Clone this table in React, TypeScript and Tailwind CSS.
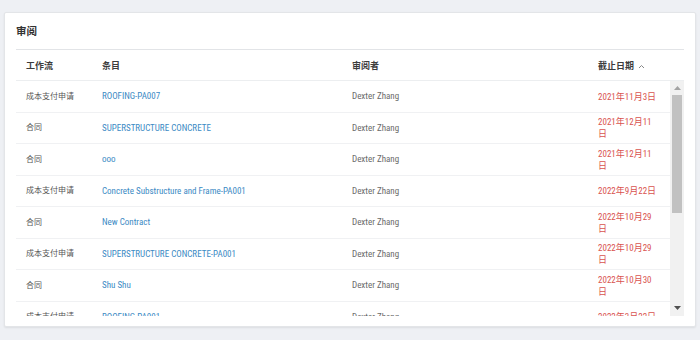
import React from "react";

type Row = {
  flow: string;
  item: string;
  reviewer: string;
  due: string;
};

const rows: Row[] = [
  { flow: "成本支付申请", item: "ROOFING-PA007", reviewer: "Dexter Zhang", due: "2021年11月3日" },
  { flow: "合同", item: "SUPERSTRUCTURE CONCRETE", reviewer: "Dexter Zhang", due: "2021年12月11日" },
  { flow: "合同", item: "ooo", reviewer: "Dexter Zhang", due: "2021年12月11日" },
  { flow: "成本支付申请", item: "Concrete Substructure and Frame-PA001", reviewer: "Dexter Zhang", due: "2022年9月22日" },
  { flow: "合同", item: "New Contract", reviewer: "Dexter Zhang", due: "2022年10月29日" },
  { flow: "成本支付申请", item: "SUPERSTRUCTURE CONCRETE-PA001", reviewer: "Dexter Zhang", due: "2022年10月29日" },
  { flow: "合同", item: "Shu Shu", reviewer: "Dexter Zhang", due: "2022年10月30日" },
  { flow: "成本支付申请", item: "ROOFING-PA001", reviewer: "Dexter Zhang", due: "2022年3月22日" },
];

const font =
  "font-['Liberation_Sans_Narrow','Roboto_Condensed','Roboto','Noto_Sans_CJK_SC',sans-serif]";

// drawn scrollbar, the page's native one is hidden in the capture
function ScrollBar() {
  return (
    <div className="w-[14px] shrink-0 bg-[#f1f1f1] flex flex-col items-center">
      <div className="h-[14px] flex items-center justify-center">
        <svg width="7" height="4" viewBox="0 0 7 4">
          <path d="M0 4 L3.5 0 L7 4 Z" fill="#a3a3a3" />
        </svg>
      </div>
      <div className="w-[10px] h-[118px] bg-[#c1c1c1]" />
      <div className="flex-1" />
      <div className="h-[16px] flex items-center justify-center">
        <svg width="7" height="4" viewBox="0 0 7 4">
          <path d="M0 0 L3.5 4 L7 0 Z" fill="#505050" />
        </svg>
      </div>
    </div>
  );
}

export default function App() {
  return (
    <div className={`w-[700px] h-[340px] bg-[#eef0f4] pt-[12px] px-[4px] ${font}`}>
      <div className="h-[315px] bg-white border border-[#e3e5e8] rounded-[2px] shadow-[0_1px_2px_rgba(0,0,0,0.08)] px-[11px] flex flex-col">
        <div className="h-[37px] pt-[1px] flex items-center border-b border-[#e2e4e7] text-[10.5px] font-semibold text-[#333] shrink-0">
          审阅
        </div>

        <div className="flex h-[31px] pt-[3px] items-center border-b border-[#eceef0] text-[9px] font-semibold text-[#3c3c3c] shrink-0 pr-[14px]">
          <div className="w-[76px] pl-[10px]">工作流</div>
          <div className="w-[250px] pl-[10px]">条目</div>
          <div className="w-[246px] pl-[10px]">审阅者</div>
          <div className="flex-1 pl-[10px] flex items-center gap-[4px]">
            截止日期
            <svg width="7" height="5" viewBox="0 0 7 5" className="text-[#888]">
              <path d="M1 4 L3.5 1.5 L6 4" fill="none" stroke="currentColor" strokeWidth="1" />
            </svg>
          </div>
        </div>

        <div className="h-[235px] flex">
          <div className="flex-1 overflow-hidden">
            {rows.map((r, i) => (
              <div
                key={i}
                className="flex h-[31.5px] pt-[1px] items-center border-b border-[#f0f1f3] text-[9px]"
              >
                <div className="w-[76px] pl-[10px] text-[8px] text-[#555]">{r.flow}</div>
                <div className="w-[250px] pl-[10px] text-[#3b8ac4] truncate">{r.item}</div>
                <div className="w-[246px] pl-[10px] text-[#6a6a6a]">{r.reviewer}</div>
                <div className="flex-1 pl-[10px]">
                  <div className="w-[60px] leading-[12px] text-[#d9534f]">{r.due}</div>
                </div>
              </div>
            ))}
          </div>
          <ScrollBar />
        </div>
      </div>
    </div>
  );
}
